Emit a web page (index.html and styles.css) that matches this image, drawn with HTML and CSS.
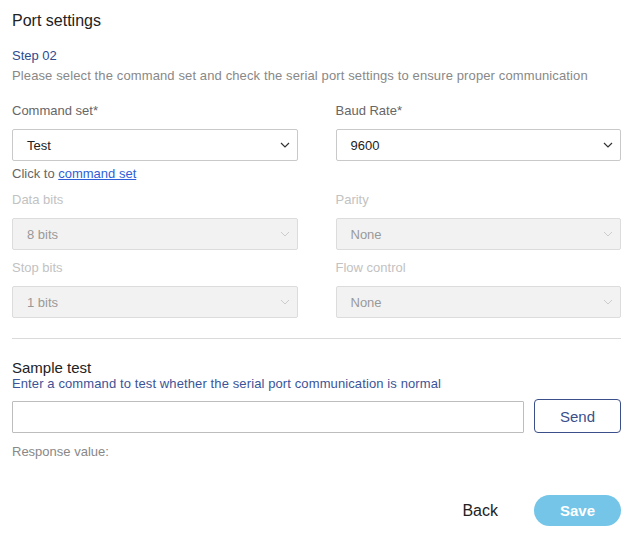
FILE: index.html
```html
<!DOCTYPE html>
<html>
<head>
    <link rel="stylesheet" href="styles.css">
</head>
<body>
    <div class="panel">
        <h1 class="title">Port settings</h1>
        <div class="step">Step 02</div>
        <p class="desc">Please select the command set and check the serial port settings to ensure proper communication</p>

        <div class="fields">
            <div class="field">
                <label class="label">Command set*</label>
                <div class="select">
                    <span>Test</span>
                    <svg class="chevron" width="10" height="6" viewBox="0 0 10 6"><path d="M1 1l4 4 4-4" fill="none" stroke="#333" stroke-width="1.2"/></svg>
                </div>
                <div class="hint">Click to <a href="#">command set</a></div>
            </div>
            <div class="field">
                <label class="label">Baud Rate*</label>
                <div class="select">
                    <span>9600</span>
                    <svg class="chevron" width="10" height="6" viewBox="0 0 10 6"><path d="M1 1l4 4 4-4" fill="none" stroke="#333" stroke-width="1.2"/></svg>
                </div>
            </div>
            <div class="field">
                <label class="label off">Data bits</label>
                <div class="select disabled">
                    <span>8 bits</span>
                    <svg class="chevron" width="10" height="6" viewBox="0 0 10 6"><path d="M1 1l4 4 4-4" fill="none" stroke="#ccc" stroke-width="1"/></svg>
                </div>
            </div>
            <div class="field">
                <label class="label off">Parity</label>
                <div class="select disabled">
                    <span>None</span>
                    <svg class="chevron" width="10" height="6" viewBox="0 0 10 6"><path d="M1 1l4 4 4-4" fill="none" stroke="#ccc" stroke-width="1"/></svg>
                </div>
            </div>
            <div class="field">
                <label class="label off">Stop bits</label>
                <div class="select disabled">
                    <span>1 bits</span>
                    <svg class="chevron" width="10" height="6" viewBox="0 0 10 6"><path d="M1 1l4 4 4-4" fill="none" stroke="#ccc" stroke-width="1"/></svg>
                </div>
            </div>
            <div class="field">
                <label class="label off">Flow control</label>
                <div class="select disabled">
                    <span>None</span>
                    <svg class="chevron" width="10" height="6" viewBox="0 0 10 6"><path d="M1 1l4 4 4-4" fill="none" stroke="#ccc" stroke-width="1"/></svg>
                </div>
            </div>
        </div>

        <hr class="divider">

        <h2 class="sub-title">Sample test</h2>
        <div class="sub-desc">Enter a command to test whether the serial port communication is normal</div>
        <div class="test-row">
            <input type="text" class="test-input">
            <button class="btn-send">Send</button>
        </div>
        <div class="response">Response value:</div>

        <div class="footer">
            <button class="btn-back">Back</button>
            <button class="btn-save">Save</button>
        </div>
    </div>
</body>
</html>
```

FILE: styles.css
```css
body {
    font-family: "Liberation Sans", Arial, sans-serif;
    background-color: #ffffff;
    margin: 0;
    padding: 0;
}
.panel {
    padding: 11px 14px 0 12px;
}
.title {
    font-size: 16px;
    font-weight: normal;
    color: #222;
    line-height: 20px;
    margin: 0;
}
.step {
    font-size: 13px;
    color: #2d4b8e;
    line-height: 18px;
    margin-top: 16px;
}
.desc {
    font-size: 13px;
    color: #888;
    line-height: 20px;
    letter-spacing: 0.12px;
    margin: 1px 0 0 0;
}
.fields {
    display: grid;
    grid-template-columns: 1fr 1fr;
    column-gap: 38px;
    row-gap: 9px;
    margin-top: 16px;
}
.label {
    display: block;
    font-size: 13px;
    color: #666;
    line-height: 18px;
    margin-bottom: 9px;
}
.label.off {
    color: #c2c2c2;
}
.select {
    display: flex;
    align-items: center;
    justify-content: space-between;
    height: 32px;
    box-sizing: border-box;
    border: 1px solid #c9c9c9;
    border-radius: 2px;
    padding: 0 7px 0 14px;
    font-size: 13px;
    color: #222;
}
.select.disabled {
    background-color: #f2f2f2;
    border-color: #dcdcdc;
    color: #999;
}
.hint {
    font-size: 13px;
    color: #666;
    line-height: 16px;
    margin-top: 5px;
}
.hint a {
    color: #2f5fd8;
}
.divider {
    border: none;
    border-top: 1px solid #dadada;
    margin: 20px 0 0 0;
}
.sub-title {
    font-size: 15px;
    font-weight: normal;
    color: #222;
    line-height: 18px;
    margin: 20px 0 0 0;
}
.sub-desc {
    font-size: 13px;
    color: #3b5497;
    line-height: 14px;
    letter-spacing: 0.11px;
}
.test-row {
    display: flex;
    align-items: flex-end;
    gap: 10px;
    margin-top: 8px;
}
.test-input {
    flex: 1;
    height: 32px;
    box-sizing: border-box;
    border: 1px solid #bdbdbd;
    border-radius: 1px;
    margin: 0;
    padding: 0 10px;
}
.btn-send {
    width: 87px;
    height: 34px;
    border: 1px solid #3b4f8a;
    border-radius: 4px;
    background-color: #fff;
    color: #3b4f8a;
    font-family: inherit;
    font-size: 15px;
    cursor: pointer;
}
.response {
    font-size: 13px;
    color: #888;
    line-height: 18px;
    margin-top: 10px;
}
.footer {
    display: flex;
    justify-content: flex-end;
    align-items: center;
    gap: 36px;
    margin-top: 34px;
}
.btn-back {
    border: none;
    background: none;
    padding: 0;
    font-family: inherit;
    font-size: 16px;
    color: #222;
    cursor: pointer;
}
.btn-save {
    width: 87px;
    height: 31px;
    border: none;
    border-radius: 16px;
    background-color: #74c5e8;
    color: #fff;
    font-family: inherit;
    font-size: 15px;
    font-weight: bold;
    cursor: pointer;
}
```
